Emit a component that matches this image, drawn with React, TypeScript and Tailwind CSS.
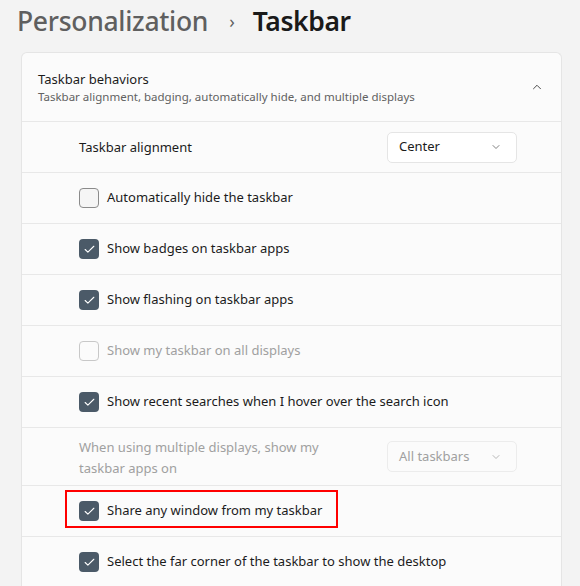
import { ChevronDown, ChevronUp, Check } from "lucide-react";

type Row =
  | { kind: "select"; label: string; value: string; disabled?: boolean; tall?: boolean }
  | { kind: "check"; label: string; checked: boolean; disabled?: boolean; highlight?: boolean };

const rows: Row[] = [
  { kind: "select", label: "Taskbar alignment", value: "Center" },
  { kind: "check", label: "Automatically hide the taskbar", checked: false },
  { kind: "check", label: "Show badges on taskbar apps", checked: true },
  { kind: "check", label: "Show flashing on taskbar apps", checked: true },
  { kind: "check", label: "Show my taskbar on all displays", checked: false, disabled: true },
  { kind: "check", label: "Show recent searches when I hover over the search icon", checked: true },
  {
    kind: "select",
    label: "When using multiple displays, show my taskbar apps on",
    value: "All taskbars",
    disabled: true,
    tall: true,
  },
  { kind: "check", label: "Share any window from my taskbar", checked: true, highlight: true },
  { kind: "check", label: "Select the far corner of the taskbar to show the desktop", checked: true },
];

function Checkbox({ checked, disabled }: { checked: boolean; disabled?: boolean }) {
  if (checked) {
    return (
      <div className="w-5 h-5 rounded-[4px] bg-[#4b5a68] flex items-center justify-center shrink-0">
        <Check className="w-[13px] h-[13px] text-white" strokeWidth={2} />
      </div>
    );
  }
  return (
    <div
      className={
        disabled
          ? "w-5 h-5 rounded-[4px] border border-[#c8c8c8] bg-[#fbfbfb] shrink-0"
          : "w-5 h-5 rounded-[4px] border border-[#8b8b8b] bg-[#f5f5f5] shrink-0"
      }
    />
  );
}

export default function App() {
  return (
    <div className="w-[580px] h-[586px] bg-[#f3f3f3] overflow-hidden font-['Noto_Sans',sans-serif] text-[#1b1b1b]">
      {/* Breadcrumb */}
      <div className="h-[52px] pl-[17px] flex items-center text-[26.5px] leading-none pb-[10px]">
        <span className="text-[#5f5f5f] font-medium tracking-[-0.3px]">Personalization</span>
        <span className="text-[#5f5f5f] text-[18px] ml-[21px] mr-[18px]">›</span>
        <span className="text-[#1a1a1a] font-semibold tracking-[-0.4px]">Taskbar</span>
      </div>

      {/* Card */}
      <div className="ml-[21px] w-[541px] rounded-t-[6px] border border-b-0 border-[#e5e5e5] bg-[#fbfbfb]">
        <div className="h-[68px] pl-[16px] pr-[17px] flex items-center justify-between">
          <div className="pt-[1px]">
            <div className="text-[13px] leading-[19px] text-[#1b1b1b]">Taskbar behaviors</div>
            <div className="text-[11.5px] leading-[16px] text-[#616161]">
              Taskbar alignment, badging, automatically hide, and multiple displays
            </div>
          </div>
          <ChevronUp className="w-[14px] h-[14px] text-[#333]" strokeWidth={1.5} />
        </div>

        {rows.map((row) => (
          <div
            key={row.label}
            className={
              (row.kind === "select" && row.tall ? "h-[58px] pt-[3px]" : "h-[51px]") +
              " relative border-t border-[#e8e8e8] pl-[57px] pr-[44px] flex items-center justify-between"
            }
          >
            {row.kind === "select" ? (
              <>
                <span
                  className={
                    row.disabled
                      ? "text-[13px] leading-[21px] text-[#a0a0a0] w-[250px]"
                      : "text-[13px] leading-[21px] text-[#1b1b1b]"
                  }
                >
                  {row.label}
                </span>
                <div
                  className={
                    row.disabled
                      ? "w-[130px] h-[31px] -mt-[3px] rounded-[5px] border border-[#ececec] bg-[#fbfbfb] pl-[11px] pr-[14px] flex items-center justify-between text-[13px] text-[#a0a0a0]"
                      : "w-[130px] h-[31px] rounded-[5px] border border-[#e5e5e5] bg-white pl-[11px] pr-[14px] flex items-center justify-between text-[13px] text-[#1b1b1b]"
                  }
                >
                  <span>{row.value}</span>
                  <ChevronDown
                    className={row.disabled ? "w-3 h-3 text-[#a0a0a0]" : "w-3 h-3 text-[#555]"}
                    strokeWidth={1.5}
                  />
                </div>
              </>
            ) : (
              <div className="flex items-center gap-[8px]">
                <Checkbox checked={row.checked} disabled={row.disabled} />
                <span
                  className={
                    row.disabled ? "text-[13px] text-[#a0a0a0]" : "text-[13px] text-[#1b1b1b]"
                  }
                >
                  {row.label}
                </span>
              </div>
            )}
            {row.kind === "check" && row.highlight && (
              <div className="absolute left-[43px] top-[4px] w-[273px] h-[38px] border-2 border-[#ff0000] pointer-events-none" />
            )}
          </div>
        ))}
      </div>
    </div>
  );
}
